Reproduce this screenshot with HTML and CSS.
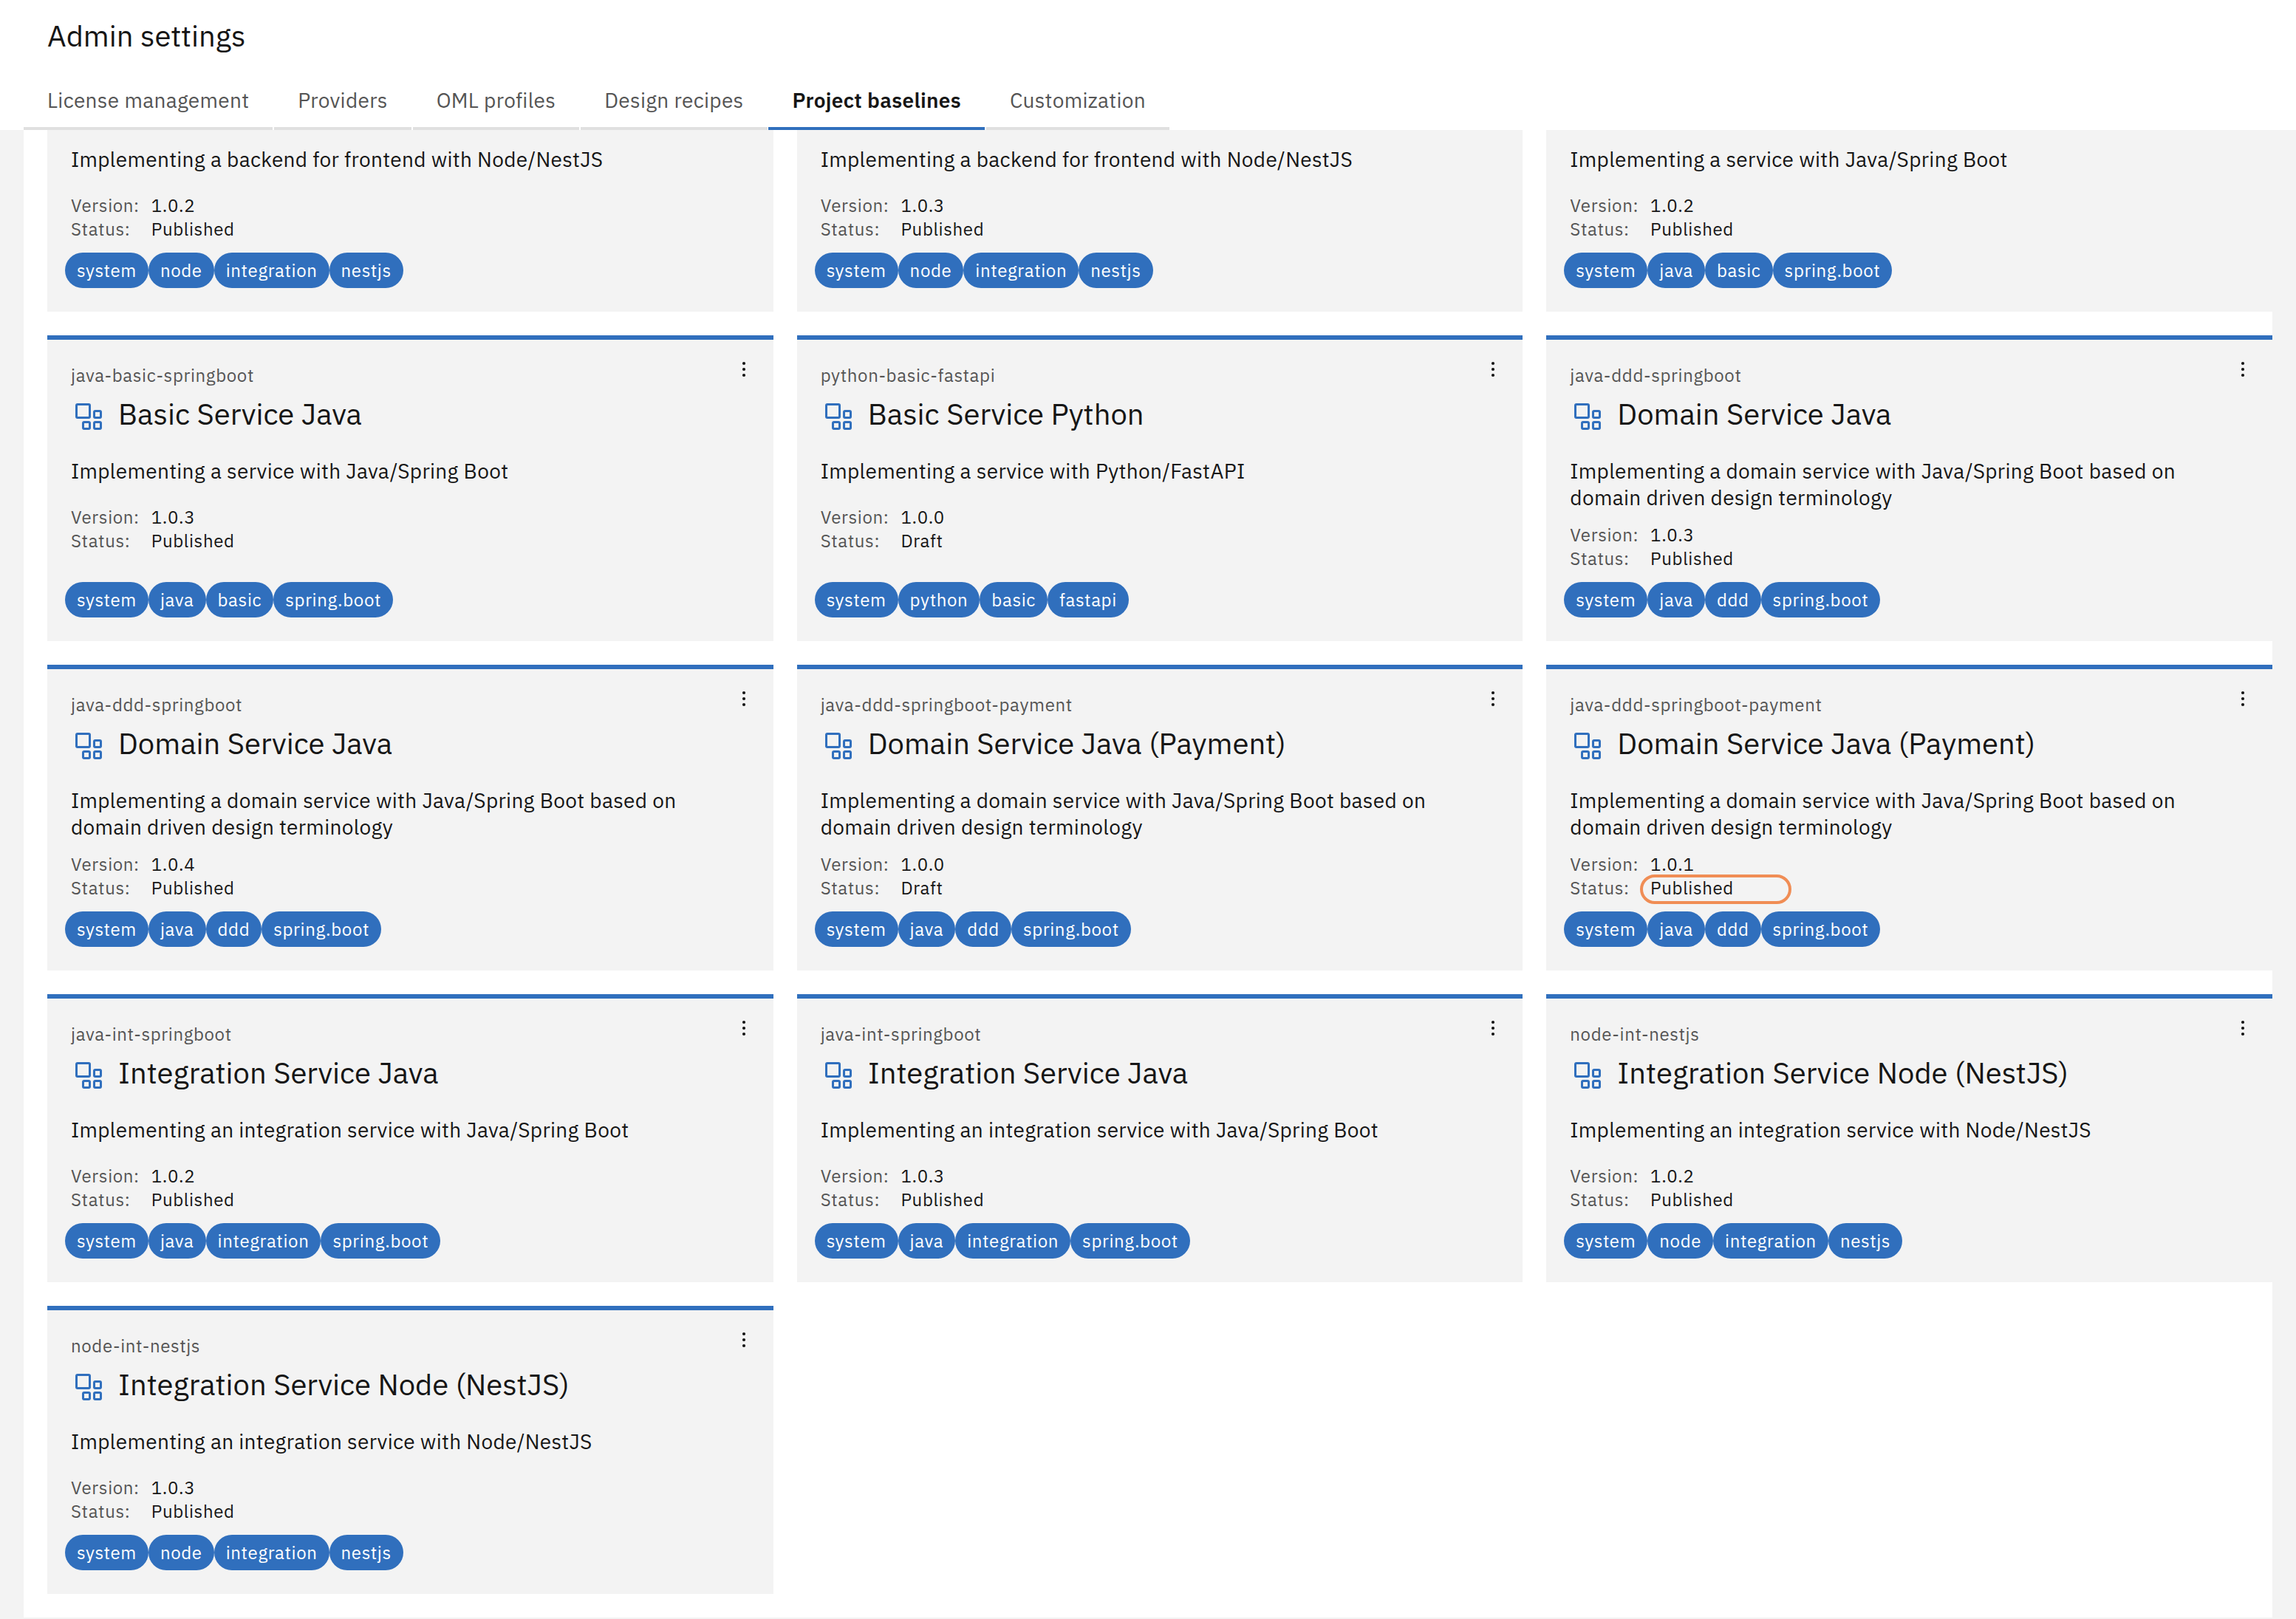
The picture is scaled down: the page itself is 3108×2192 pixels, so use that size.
FILE: index.html
```
<!DOCTYPE html>
<html lang="en">
<head>
<meta charset="utf-8">
<title>Admin settings</title>
<link rel="stylesheet" href="styles.css">
</head>
<body>
<svg class="sprite" aria-hidden="true">
  <symbol id="blocks" viewBox="0 0 48 48">
    <g fill="none" stroke="currentColor" stroke-width="3">
      <rect x="7.5" y="7.5" width="18" height="18" rx="1.5"/>
      <rect x="31.5" y="16.5" width="9" height="9" rx="1.5"/>
      <rect x="16.5" y="31.5" width="9" height="9" rx="1.5"/>
      <rect x="31.5" y="31.5" width="9" height="9" rx="1.5"/>
    </g>
  </symbol>
  <symbol id="dots" viewBox="0 0 16 32">
    <circle cx="8" cy="8" r="2.1"/><circle cx="8" cy="16" r="2.1"/><circle cx="8" cy="24" r="2.1"/>
  </symbol>
</svg>

<header class="header">
  <h1 class="header-title">Admin settings</h1>
  <nav class="tabs">
    <a class="tab">License management</a>
    <a class="tab">Providers</a>
    <a class="tab">OML profiles</a>
    <a class="tab">Design recipes</a>
    <a class="tab tab-active">Project baselines</a>
    <a class="tab">Customization</a>
  </nav>
</header>

<main class="panel">
  <article class="card card-cut">
    <p class="desc">Implementing a backend for frontend with Node/NestJS</p>
    <dl class="meta"><dt>Version:</dt><dd>1.0.2</dd><dt>Status:</dt><dd>Published</dd></dl>
    <div class="tags"><span class="tag">system</span><span class="tag">node</span><span class="tag">integration</span><span class="tag">nestjs</span></div>
  </article>
  <article class="card card-cut">
    <p class="desc">Implementing a backend for frontend with Node/NestJS</p>
    <dl class="meta"><dt>Version:</dt><dd>1.0.3</dd><dt>Status:</dt><dd>Published</dd></dl>
    <div class="tags"><span class="tag">system</span><span class="tag">node</span><span class="tag">integration</span><span class="tag">nestjs</span></div>
  </article>
  <article class="card card-cut">
    <p class="desc">Implementing a service with Java/Spring Boot</p>
    <dl class="meta"><dt>Version:</dt><dd>1.0.2</dd><dt>Status:</dt><dd>Published</dd></dl>
    <div class="tags"><span class="tag">system</span><span class="tag">java</span><span class="tag">basic</span><span class="tag">spring.boot</span></div>
  </article>

  <article class="card">
    <div class="top"><span>java-basic-springboot</span><svg class="menu"><use href="#dots"/></svg></div>
    <h2 class="name"><svg class="icon"><use href="#blocks"/></svg>Basic Service Java</h2>
    <p class="desc">Implementing a service with Java/Spring Boot</p>
    <dl class="meta"><dt>Version:</dt><dd>1.0.3</dd><dt>Status:</dt><dd>Published</dd></dl>
    <div class="tags"><span class="tag">system</span><span class="tag">java</span><span class="tag">basic</span><span class="tag">spring.boot</span></div>
  </article>
  <article class="card">
    <div class="top"><span>python-basic-fastapi</span><svg class="menu"><use href="#dots"/></svg></div>
    <h2 class="name"><svg class="icon"><use href="#blocks"/></svg>Basic Service Python</h2>
    <p class="desc">Implementing a service with Python/FastAPI</p>
    <dl class="meta"><dt>Version:</dt><dd>1.0.0</dd><dt>Status:</dt><dd>Draft</dd></dl>
    <div class="tags"><span class="tag">system</span><span class="tag">python</span><span class="tag">basic</span><span class="tag">fastapi</span></div>
  </article>
  <article class="card">
    <div class="top"><span>java-ddd-springboot</span><svg class="menu"><use href="#dots"/></svg></div>
    <h2 class="name"><svg class="icon"><use href="#blocks"/></svg>Domain Service Java</h2>
    <p class="desc">Implementing a domain service with Java/Spring Boot based on<br>domain driven design terminology</p>
    <dl class="meta"><dt>Version:</dt><dd>1.0.3</dd><dt>Status:</dt><dd>Published</dd></dl>
    <div class="tags"><span class="tag">system</span><span class="tag">java</span><span class="tag">ddd</span><span class="tag">spring.boot</span></div>
  </article>

  <article class="card">
    <div class="top"><span>java-ddd-springboot</span><svg class="menu"><use href="#dots"/></svg></div>
    <h2 class="name"><svg class="icon"><use href="#blocks"/></svg>Domain Service Java</h2>
    <p class="desc">Implementing a domain service with Java/Spring Boot based on<br>domain driven design terminology</p>
    <dl class="meta"><dt>Version:</dt><dd>1.0.4</dd><dt>Status:</dt><dd>Published</dd></dl>
    <div class="tags"><span class="tag">system</span><span class="tag">java</span><span class="tag">ddd</span><span class="tag">spring.boot</span></div>
  </article>
  <article class="card">
    <div class="top"><span>java-ddd-springboot-payment</span><svg class="menu"><use href="#dots"/></svg></div>
    <h2 class="name"><svg class="icon"><use href="#blocks"/></svg>Domain Service Java (Payment)</h2>
    <p class="desc">Implementing a domain service with Java/Spring Boot based on<br>domain driven design terminology</p>
    <dl class="meta"><dt>Version:</dt><dd>1.0.0</dd><dt>Status:</dt><dd>Draft</dd></dl>
    <div class="tags"><span class="tag">system</span><span class="tag">java</span><span class="tag">ddd</span><span class="tag">spring.boot</span></div>
  </article>
  <article class="card">
    <div class="top"><span>java-ddd-springboot-payment</span><svg class="menu"><use href="#dots"/></svg></div>
    <h2 class="name"><svg class="icon"><use href="#blocks"/></svg>Domain Service Java (Payment)</h2>
    <p class="desc">Implementing a domain service with Java/Spring Boot based on<br>domain driven design terminology</p>
    <dl class="meta"><dt>Version:</dt><dd>1.0.1</dd><dt>Status:</dt><dd class="marked">Published</dd></dl>
    <div class="tags"><span class="tag">system</span><span class="tag">java</span><span class="tag">ddd</span><span class="tag">spring.boot</span></div>
  </article>

  <article class="card">
    <div class="top"><span>java-int-springboot</span><svg class="menu"><use href="#dots"/></svg></div>
    <h2 class="name"><svg class="icon"><use href="#blocks"/></svg>Integration Service Java</h2>
    <p class="desc">Implementing an integration service with Java/Spring Boot</p>
    <dl class="meta"><dt>Version:</dt><dd>1.0.2</dd><dt>Status:</dt><dd>Published</dd></dl>
    <div class="tags"><span class="tag">system</span><span class="tag">java</span><span class="tag">integration</span><span class="tag">spring.boot</span></div>
  </article>
  <article class="card">
    <div class="top"><span>java-int-springboot</span><svg class="menu"><use href="#dots"/></svg></div>
    <h2 class="name"><svg class="icon"><use href="#blocks"/></svg>Integration Service Java</h2>
    <p class="desc">Implementing an integration service with Java/Spring Boot</p>
    <dl class="meta"><dt>Version:</dt><dd>1.0.3</dd><dt>Status:</dt><dd>Published</dd></dl>
    <div class="tags"><span class="tag">system</span><span class="tag">java</span><span class="tag">integration</span><span class="tag">spring.boot</span></div>
  </article>
  <article class="card">
    <div class="top"><span>node-int-nestjs</span><svg class="menu"><use href="#dots"/></svg></div>
    <h2 class="name"><svg class="icon"><use href="#blocks"/></svg>Integration Service Node (NestJS)</h2>
    <p class="desc">Implementing an integration service with Node/NestJS</p>
    <dl class="meta"><dt>Version:</dt><dd>1.0.2</dd><dt>Status:</dt><dd>Published</dd></dl>
    <div class="tags"><span class="tag">system</span><span class="tag">node</span><span class="tag">integration</span><span class="tag">nestjs</span></div>
  </article>

  <article class="card">
    <div class="top"><span>node-int-nestjs</span><svg class="menu"><use href="#dots"/></svg></div>
    <h2 class="name"><svg class="icon"><use href="#blocks"/></svg>Integration Service Node (NestJS)</h2>
    <p class="desc">Implementing an integration service with Node/NestJS</p>
    <dl class="meta"><dt>Version:</dt><dd>1.0.3</dd><dt>Status:</dt><dd>Published</dd></dl>
    <div class="tags"><span class="tag">system</span><span class="tag">node</span><span class="tag">integration</span><span class="tag">nestjs</span></div>
  </article>
</main>
</body>
</html>
```
FILE: styles.css
```
:root {
  --blue: #306fbd;
  --text: #161616;
  --muted: #555555;
  --layer: #f3f3f3;
}

*, *::after { box-sizing: border-box; margin: 0; padding: 0; }

body {
  background: var(--layer);
  color: var(--text);
  font-family: "IBM Plex Sans", Roboto, "Liberation Sans", sans-serif;
  font-size: 28px;
  line-height: 36px;
  letter-spacing: 0.32px;
}

.sprite { display: none; }

.header {
  height: 176px;
  padding: 22px 32px 0;
  background: #fff;
  display: flex;
  flex-direction: column;
  justify-content: space-between;
}
.header-title {
  padding-left: 32px;
  font-size: 40px;
  font-weight: 400;
  line-height: 52px;
  letter-spacing: 0;
}

.tabs { display: flex; gap: 1.9px; }
.tab {
  height: 80px;
  padding: 22px 32px 0;
  border-bottom: 4px solid #e0e0e0;
  color: var(--muted);
  white-space: nowrap;
}
.tab-active {
  border-color: var(--blue);
  color: var(--text);
  font-weight: 600;
}

.panel {
  margin: 0 32px;
  padding: 0 0 32px 32px;
  background: #fff;
  display: grid;
  grid-template-columns: repeat(3, 1fr);
  gap: 32px;
}

.card {
  padding: 32px;
  border-top: 6px solid var(--blue);
  background: var(--layer);
  display: flex;
  flex-direction: column;
}
.card-cut { padding-top: 22px; border-top: 0; }

.top {
  display: flex;
  justify-content: space-between;
  color: var(--muted);
  font-size: 24px;
  line-height: 32px;
  letter-spacing: 0.64px;
}
.menu {
  width: 16px;
  height: 32px;
  margin-top: -8px;
  fill: var(--text);
}

.name {
  display: flex;
  margin: 10px 0 34px;
  font-size: 40px;
  font-weight: 400;
  line-height: 52px;
  letter-spacing: 0;
}
.icon {
  width: 48px;
  height: 48px;
  margin: 6px 16px -2px 0;
  color: var(--blue);
}

.desc { min-height: 64px; padding-bottom: 16px; }

.meta {
  display: grid;
  grid-template-columns: max-content max-content;
  column-gap: 16px;
  margin-bottom: 16px;
  font-size: 24px;
  line-height: 32px;
  letter-spacing: 0.64px;
}
.meta dt { color: var(--muted); }
.marked { position: relative; }
.marked::after {
  content: "";
  position: absolute;
  left: -14px;
  top: -2px;
  width: 205px;
  height: 40px;
  border: 4px solid #f08d55;
  border-radius: 20px;
}

.tags { display: flex; margin: auto 0 0 -8px; }
.tag {
  height: 48px;
  padding: 0 16px;
  border-radius: 24px;
  background: var(--blue);
  color: #fff;
  font-size: 24px;
  line-height: 48px;
  letter-spacing: 0.64px;
}
```
